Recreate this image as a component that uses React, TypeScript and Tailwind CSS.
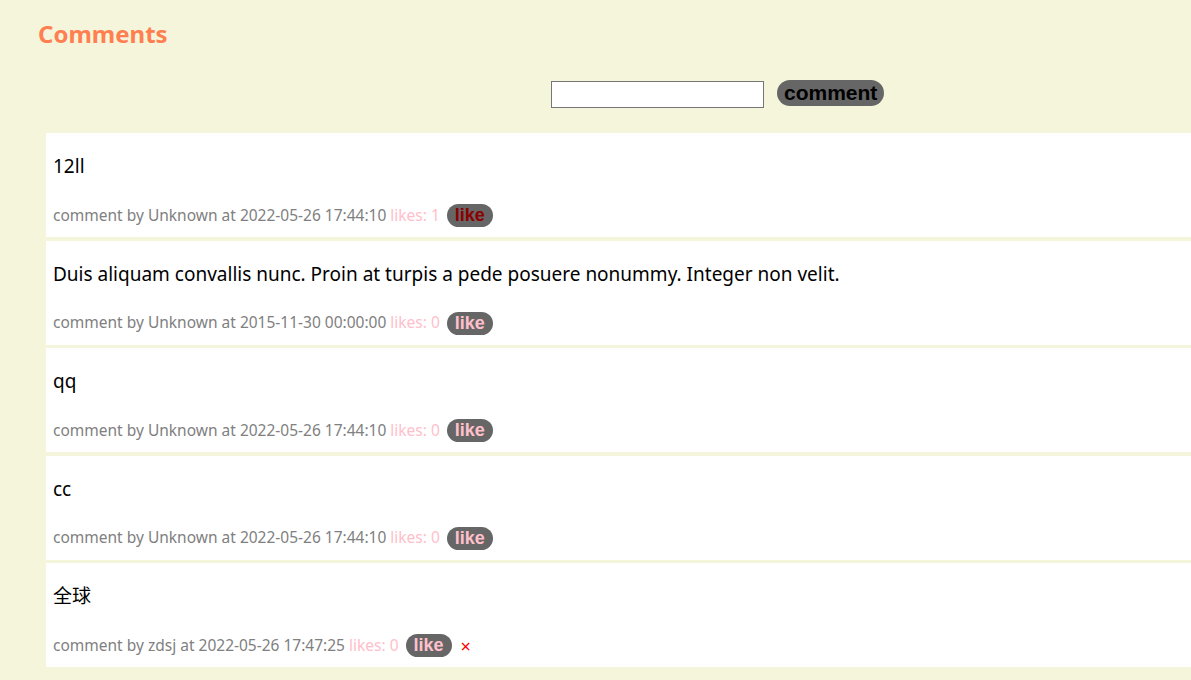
import React from "react";

type C = { text: string; by: string; at: string; likes: number; liked?: boolean; del?: boolean };

const comments: C[] = [
  { text: "12ll", by: "Unknown", at: "2022-05-26 17:44:10", likes: 1, liked: true },
  { text: "Duis aliquam convallis nunc. Proin at turpis a pede posuere nonummy. Integer non velit.", by: "Unknown", at: "2015-11-30 00:00:00", likes: 0 },
  { text: "qq", by: "Unknown", at: "2022-05-26 17:44:10", likes: 0 },
  { text: "cc", by: "Unknown", at: "2022-05-26 17:44:10", likes: 0 },
  { text: "全球", by: "zdsj", at: "2022-05-26 17:47:25", likes: 0, del: true },
];

const sans = { fontFamily: '"Noto Sans", "Noto Sans CJK SC", sans-serif' };
const arial = { fontFamily: '"Liberation Sans", Arial, sans-serif' };

export default function App() {
  return (
    <div className="w-[1191px] h-[680px] overflow-hidden bg-[#f5f5dc]" style={sans}>
      <h2 className="pl-[38px] pt-[19px] h-[78px] text-[24px] leading-[30px] font-bold text-[#ff7f50]">Comments</h2>
      <div className="flex items-center h-[33px] pl-[551px] gap-[13px]">
        <input className="w-[213px] h-[27px] bg-white border border-[#767676] outline-none" />
        <button
          className="h-[26px] mb-[3px] px-[7px] rounded-[13px] bg-[#666666] text-black text-[21px] font-bold leading-[26px]"
          style={arial}
        >
          comment
        </button>
      </div>
      <div className="flex flex-col gap-[3.5px] pl-[46px] pt-[22px]">
        {comments.map((c, i) => (
          <div key={i} className="bg-white h-[104px] pl-[7px] flex flex-col">
            <div className="h-[66px] pt-[19px] text-[19px] leading-[28px] text-black">{c.text}</div>
            <div className="flex items-center h-[33px] text-[15.5px] text-[#808080]">
              <span>
                comment by {c.by} at {c.at}
              </span>
              <span className="ml-[4px] text-[#ffc0cb]">likes: {c.likes}</span>
              <button
                className={`ml-[7px] h-[23px] px-[8px] rounded-[12px] bg-[#666666] text-[18px] font-bold leading-[23px] ${
                  c.liked ? "text-[#8b0000]" : "text-[#ffc0cb]"
                }`}
                style={arial}
              >
                like
              </button>
              {c.del && <span className="ml-[9px] text-[#ff0000] text-[18px] leading-none">×</span>}
            </div>
          </div>
        ))}
      </div>
    </div>
  );
}
